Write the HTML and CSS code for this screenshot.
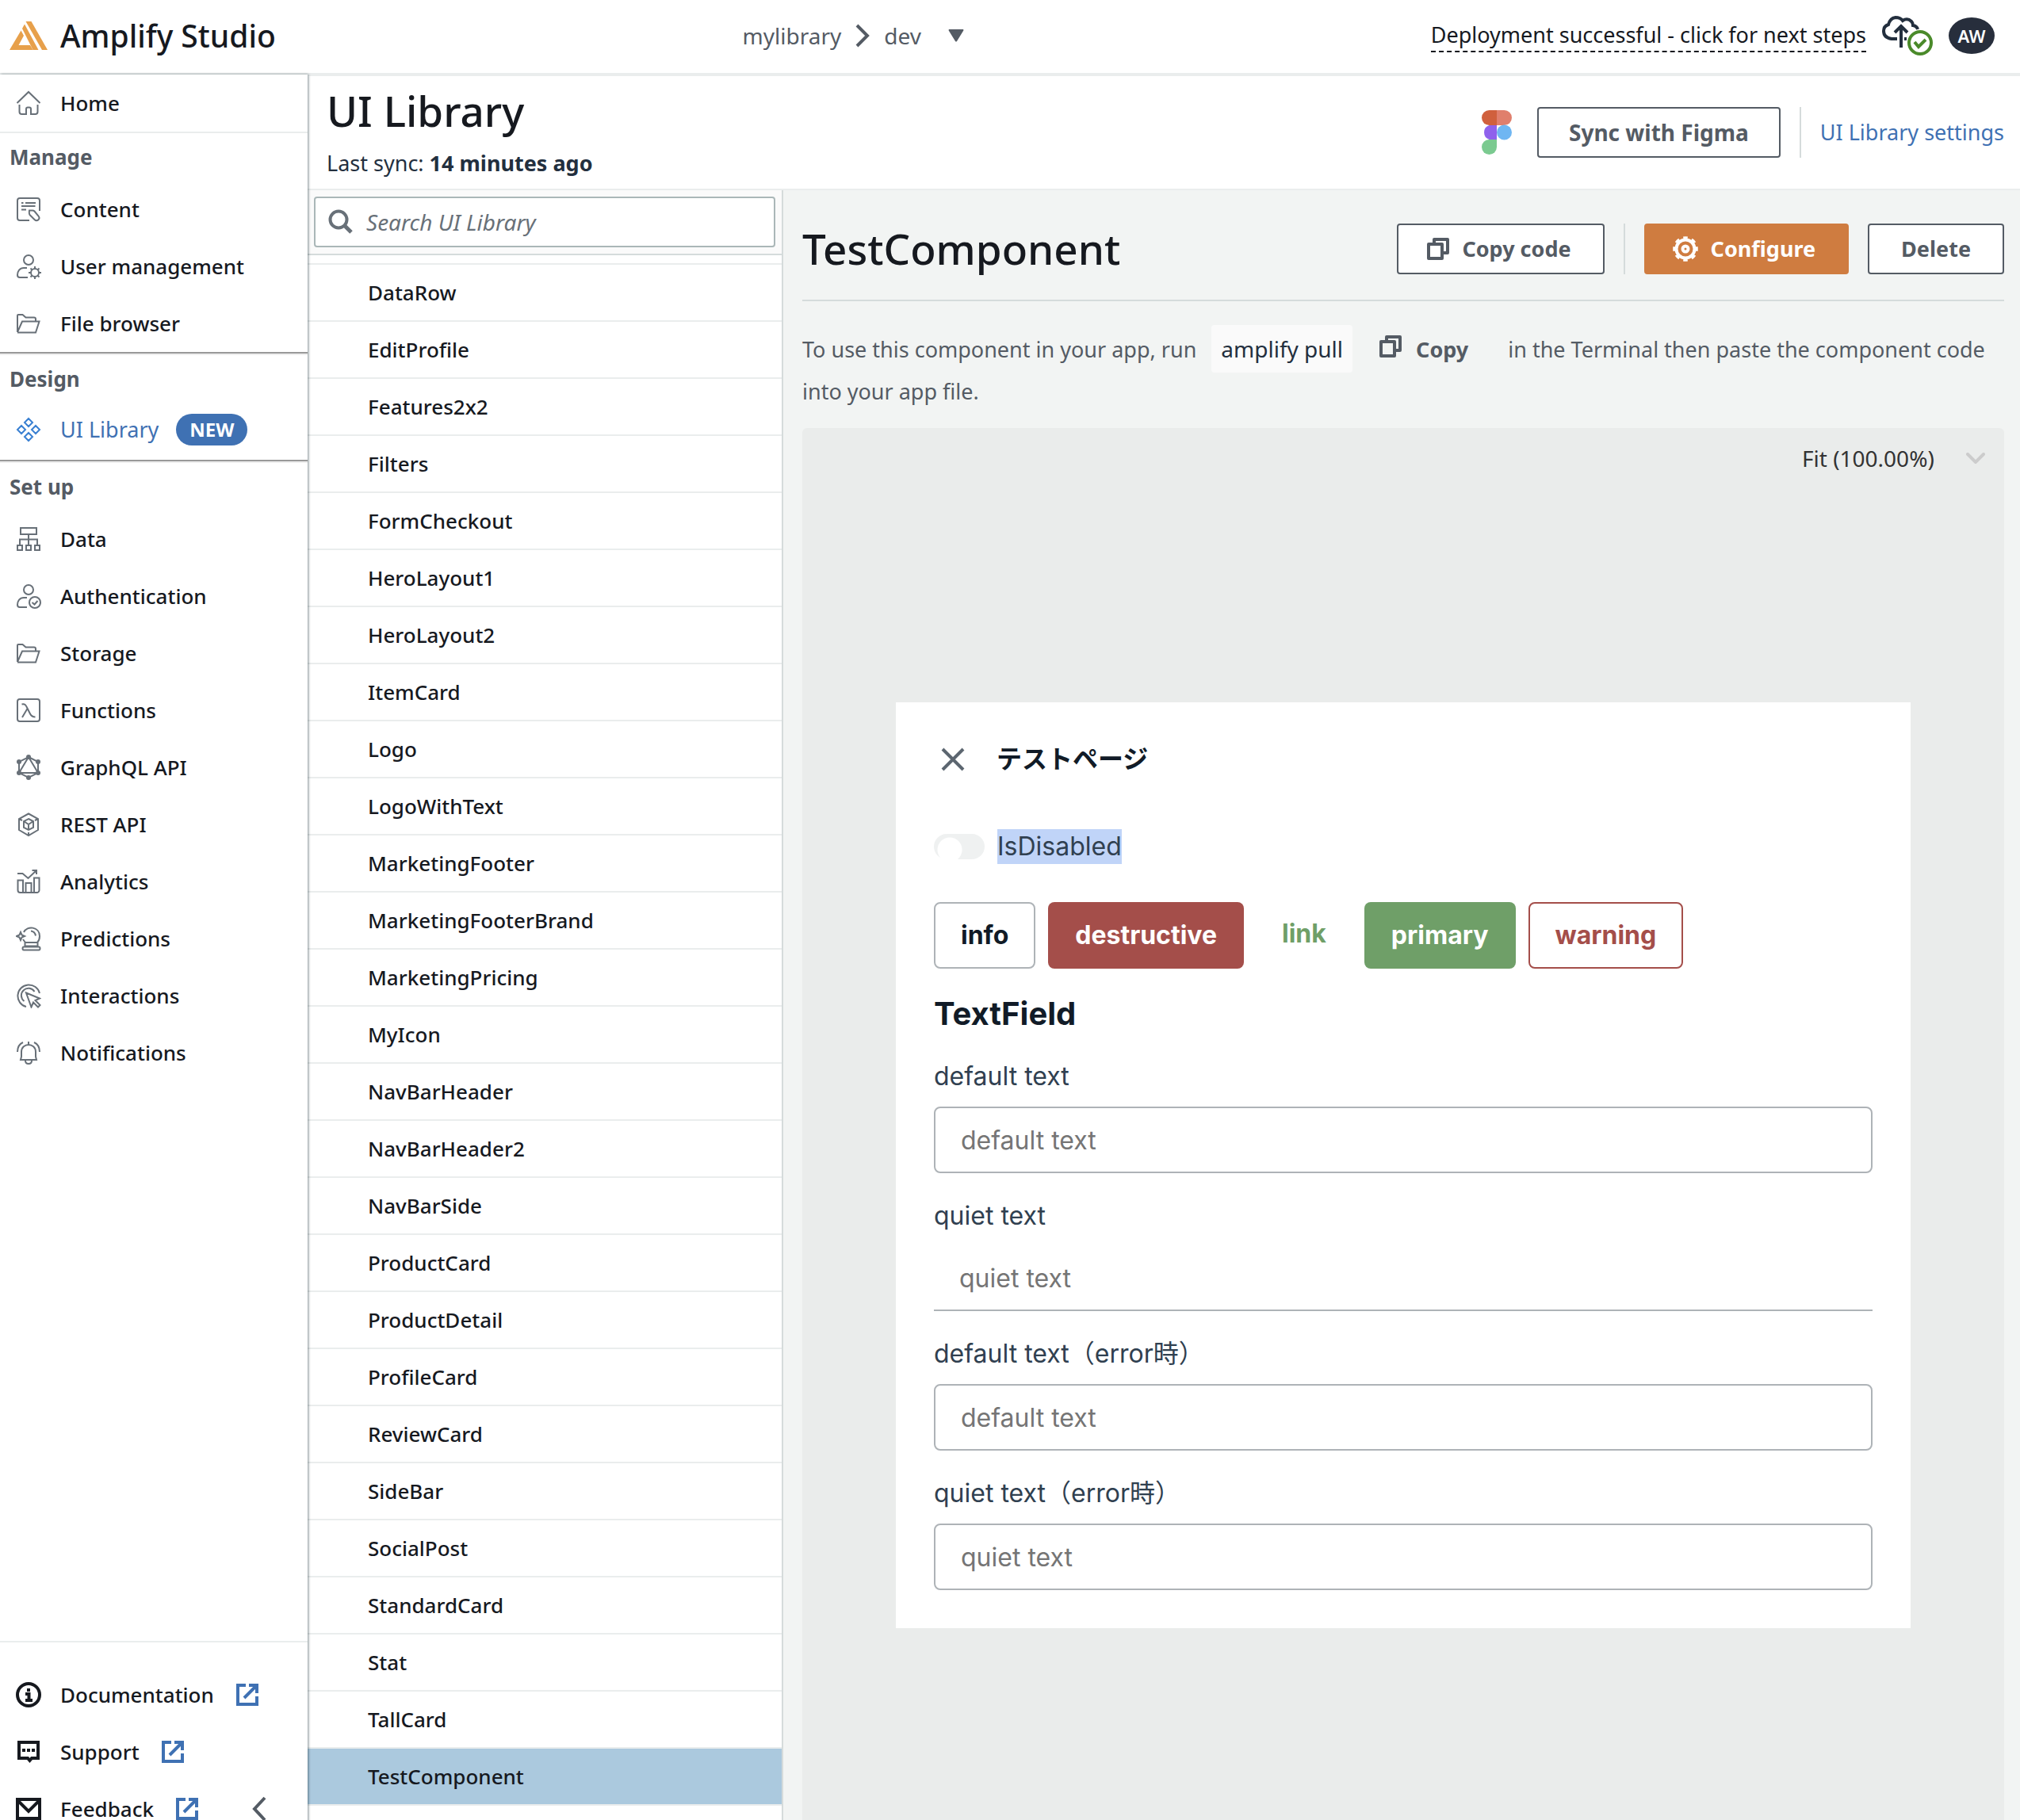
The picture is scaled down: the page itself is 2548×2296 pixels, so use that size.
FILE: index.html
```html
<!DOCTYPE html>
<html lang="en">
<head>
<meta charset="utf-8">
<title>Amplify Studio</title>
<link rel="stylesheet" href="styles.css">
</head>
<body>
<svg class="defs" aria-hidden="true">
  <symbol id="ext" viewBox="0 0 28 28"><path d="M12 2H2v24h24V16M16 2h10v10M25 3 10 18" fill="none" stroke="currentColor" stroke-width="4"/></symbol>
  <symbol id="copy" viewBox="0 0 28 28"><path d="M2 8h17v18H2zM9 7V2h17v17h-6" fill="none" stroke="currentColor" stroke-width="4" stroke-linejoin="round"/></symbol>
  <symbol id="folder" viewBox="0 0 32 32"><path d="M2 27V6q0-1 1-1h5.500l4 3.500H23q2 0 2 2V13M2 27l6-13.500h21.500L25 27.500H2"/></symbol>
</svg>
<div class="app">
  <header class="topbar">
    <a class="brand" href="#">
      <svg class="brand-logo" viewBox="0 0 48 36"><g fill="#e7a04b"><path d="M14.500 11.500 18 18 11.500 30H26l3.500 6H0z"/><path d="M16 9 19 3.500 36.500 36H29.500z"/><path d="M20.500 0h7L48 36h-7z"/></g></svg>
      Amplify Studio
    </a>
    <nav class="crumbs" aria-label="Environment">
      <a href="#">mylibrary</a>
      <svg class="crumb-sep" viewBox="0 0 18 30"><path d="M2 2l13 13L2 28" fill="none" stroke="currentColor" stroke-width="4"/></svg>
      <button class="env" type="button">dev
        <svg class="caret" viewBox="0 0 20 16"><path d="M1 0h18q1 1 0 2L11 15q-1 1-2 0L1 2Q0 1 1 0z" fill="currentColor"/></svg>
      </button>
    </nav>
    <div class="status">
      <a class="deploy" href="#">Deployment successful - click for next steps</a>
      <svg class="cloud" viewBox="0 0 64 50"><path d="M19 29h-7C5 28 2 24 2 19q0-6 6-8Q10 3 17 2q6 0 9 4 6-4 11 1 2 2 2 5 5 1 6 5M24 40V14M16 21l8-8 8 8M28 29h3" fill="none" stroke="#232f3e" stroke-width="4"/><circle cx="48" cy="34" r="14" fill="#fff" stroke="#4a8a2a" stroke-width="4"/><path d="M41 33l5 6 9-9" fill="none" stroke="#4a8a2a" stroke-width="4"/></svg>
      <button class="avatar" type="button">AW</button>
    </div>
  </header>
  <div class="body">
    <aside class="sidebar">
      <nav class="nav">
        <a class="nav-item home" href="#"><svg class="ico" viewBox="0 0 32 32"><path d="M1.500 16 16 2l14.500 14M4.500 18v9a3 3 0 0 0 3 3H13v-6.500a2 2 0 0 1 2-2h2a2 2 0 0 1 2 2V30h5.500a3 3 0 0 0 3-3v-9"/></svg>Home</a>
        <section class="group">
          <h2 class="group-title">Manage</h2>
          <a class="nav-item" href="#"><svg class="ico" viewBox="0 0 32 32"><path d="M17 30H5a3 3 0 0 1-3-3V5a3 3 0 0 1 3-3h22a3 3 0 0 1 3 3v13M7 8h2.500M12 8h13M7 12h17.500M7 16.500h6M17 17.500h4q1.500 0 2.500 1l5 6c3 4-2 7.500-5 4.500l-6-6q-1-1-.500-5.500z"/></svg>Content</a>
          <a class="nav-item" href="#"><svg class="ico" viewBox="0 0 32 32"><circle cx="16" cy="8" r="6"/><path d="M14 18h-4c-5 0-8 4-8 9q0 3 3 3h10"/><circle cx="24" cy="24" r="5"/><path d="M24 19v-3M24 29v3M19 24h-3M29 24h3M20.500 20.500l-2-2M27.500 27.500l2 2M20.500 27.500l-2 2M27.500 20.500l2-2"/></svg>User management</a>
          <a class="nav-item" href="#"><svg class="ico"><use href="#folder"/></svg>File browser</a>
        </section>
        <section class="group ruled design">
          <h2 class="group-title">Design</h2>
          <a class="nav-item current" href="#"><svg class="ico" viewBox="0 0 32 32"><path d="M16 2l5 5-5 5-5-5zM7 11l5 5-5 5-5-5zM25 11l5 5-5 5-5-5zM16 20l5 5-5 5-5-5z"/></svg>UI Library<span class="badge">NEW</span></a>
        </section>
        <section class="group ruled">
          <h2 class="group-title">Set up</h2>
          <a class="nav-item" href="#"><svg class="ico" viewBox="0 0 32 32"><path d="M6 2h20v8H6zM16 10v14M5 24v-7.500h22V24M2 24h6v6H2zM13 24h6v6h-6zM24 24h6v6h-6z"/></svg>Data</a>
          <a class="nav-item" href="#"><svg class="ico" viewBox="0 0 32 32"><circle cx="16" cy="8" r="6"/><path d="M14 18h-4c-5 0-8 4-8 9q0 3 3 3h9"/><circle cx="24" cy="24" r="7"/><path d="M20.500 24l3 2.500 4-4.500"/></svg>Authentication</a>
          <a class="nav-item" href="#"><svg class="ico"><use href="#folder"/></svg>Storage</a>
          <a class="nav-item" href="#"><svg class="ico" viewBox="0 0 32 32"><rect x="2" y="2" width="28" height="28" rx="3"/><path d="M7.500 8.500c4-1 5 1 6.500 4l4 8c1.500 3 3 4 6.500 4M14.500 14L8 25"/></svg>Functions</a>
          <a class="nav-item" href="#"><svg class="ico" viewBox="0 0 32 32"><path d="M16 3l12 6v14l-12 6-12-6V9zM16 3l12 20H4z"/><g fill="#687078" stroke="none"><circle cx="16" cy="3" r="3"/><circle cx="28" cy="9" r="3"/><circle cx="28" cy="23" r="3"/><circle cx="16" cy="29" r="3"/><circle cx="4" cy="23" r="3"/><circle cx="4" cy="9" r="3"/></g></svg>GraphQL API</a>
          <a class="nav-item" href="#"><svg class="ico" viewBox="0 0 32 32"><path d="M16 2.500l12 6.500v14l-12 7-12-7V9zM16 9l6 3v8l-6 3-6-3v-8zM10 12l6 4 6-4M16 16v7M16 26v4M4 9l4 2M28 9l-4 2"/></svg>REST API</a>
          <a class="nav-item" href="#"><svg class="ico" viewBox="0 0 32 32"><path d="M2 6h6.500l7 6L26 2M20.500 2H26v5M5.500 30h21a3 3 0 0 0 3-3V11.500h-6.500V30M5.500 30a3 3 0 0 1-3-3V14.500H9V30M12.500 30V18h7v12"/></svg>Analytics</a>
          <a class="nav-item" href="#"><svg class="ico" viewBox="0 0 32 32"><path d="M10 8c4-9 20-7 20 5 0 4-1 6-3 8H12l-3-4M19 6.500q5 .500 6 6M11.500 21v4.500h16V21M10 26.500h19q1.500 0 1.500 2t-1.500 2H10q-1.500 0-1.500-2t1.500-2zM6 8l1.500 3.500L11 13l-3.500 1.500L6 18l-1.500-3.500L1 13l3.500-1.500z"/></svg>Predictions</a>
          <a class="nav-item" href="#"><svg class="ico" viewBox="0 0 32 32"><path d="M13 30A14 14 0 1 1 30 13M10.500 23A9 9 0 1 1 23.500 11M13 12.500l17 7-5.500 2.500 6 6-2.500 2.500-6-6-2.500 6z"/></svg>Interactions</a>
          <a class="nav-item" href="#"><svg class="ico" viewBox="0 0 32 32"><path d="M16 2v4M7 21v-6c0-12 18-12 18 0v6l1 4H6zM12 26q0 4 4 4t4-4M2 15Q2 6 9 3M30 15q0-9-7-12"/></svg>Notifications</a>
        </section>
      </nav>
      <footer class="side-foot">
        <a class="nav-item dark" href="#"><svg class="ico" viewBox="0 0 32 32"><circle cx="16" cy="16" r="14" stroke-width="4"/><path d="M14 10h4M12 15h4.500v8M12 23h9" stroke-width="4"/></svg>Documentation<svg class="ext"><use href="#ext"/></svg></a>
        <a class="nav-item dark" href="#"><svg class="ico" viewBox="0 0 32 32"><path d="M4 4h24v20h-8l-2.500 3L15 24H4z" stroke-width="4"/><path d="M8 14h4M14 14h4M20 14h4" stroke-width="4"/></svg>Support<svg class="ext"><use href="#ext"/></svg></a>
        <div class="foot-row">
          <a class="nav-item dark" href="#"><svg class="ico" viewBox="0 0 32 32"><path d="M2 4h28v24H2zM3 6l13 13L29 6" stroke-width="4"/></svg>Feedback<svg class="ext"><use href="#ext"/></svg></a>
          <button class="collapse" type="button" aria-label="Collapse menu"><svg viewBox="0 0 18 32"><path d="M16 2 3 16l13 14" fill="none" stroke="currentColor" stroke-width="4"/></svg></button>
        </div>
      </footer>
    </aside>
    <main class="main">
      <div class="page-head">
        <div>
          <h1 class="title">UI Library</h1>
          <p class="sync">Last sync: <strong>14 minutes ago</strong></p>
        </div>
        <div class="page-actions">
          <svg class="figma" viewBox="0 0 38 56"><path d="M19 0h-9.500a9.500 9.500 0 0 0 0 19H19z" fill="#d0603d"/><path d="M19 0h9.500a9.500 9.500 0 0 1 0 19H19z" fill="#e07f6c"/><path d="M19 19h-9.500a9.500 9.500 0 0 0 0 18H19z" fill="#8f62ec"/><circle cx="28.500" cy="28" r="9.500" fill="#6fb6f2"/><path d="M19 37h-9.500a9.500 9.500 0 1 0 9.500 9.500z" fill="#7bca90"/></svg>
          <button class="btn" type="button">Sync with Figma</button>
          <a class="settings" href="#">UI Library settings</a>
        </div>
      </div>
      <div class="columns">
        <section class="library">
          <div class="search">
            <label class="search-box">
              <svg class="search-ico" viewBox="0 0 32 32"><circle cx="13" cy="13" r="10.500" fill="none" stroke="currentColor" stroke-width="4"/><path d="M20 20l9 9" stroke="currentColor" stroke-width="5"/></svg>
              <input class="search-input" type="search" placeholder="Search UI Library" aria-label="Search UI Library">
            </label>
          </div>
          <ul class="items">
            <li><a href="#">DataRow</a></li>
            <li><a href="#">EditProfile</a></li>
            <li><a href="#">Features2x2</a></li>
            <li><a href="#">Filters</a></li>
            <li><a href="#">FormCheckout</a></li>
            <li><a href="#">HeroLayout1</a></li>
            <li><a href="#">HeroLayout2</a></li>
            <li><a href="#">ItemCard</a></li>
            <li><a href="#">Logo</a></li>
            <li><a href="#">LogoWithText</a></li>
            <li><a href="#">MarketingFooter</a></li>
            <li><a href="#">MarketingFooterBrand</a></li>
            <li><a href="#">MarketingPricing</a></li>
            <li><a href="#">MyIcon</a></li>
            <li><a href="#">NavBarHeader</a></li>
            <li><a href="#">NavBarHeader2</a></li>
            <li><a href="#">NavBarSide</a></li>
            <li><a href="#">ProductCard</a></li>
            <li><a href="#">ProductDetail</a></li>
            <li><a href="#">ProfileCard</a></li>
            <li><a href="#">ReviewCard</a></li>
            <li><a href="#">SideBar</a></li>
            <li><a href="#">SocialPost</a></li>
            <li><a href="#">StandardCard</a></li>
            <li><a href="#">Stat</a></li>
            <li><a href="#">TallCard</a></li>
            <li><a class="selected" href="#" aria-current="true">TestComponent</a></li>
          </ul>
        </section>
        <section class="detail">
          <div class="detail-head">
            <h2 class="title">TestComponent</h2>
            <div class="detail-actions">
              <button class="btn" type="button"><svg class="btn-ico"><use href="#copy"/></svg>Copy code</button>
              <span class="divider"></span>
              <button class="btn btn-orange" type="button"><svg class="gear" viewBox="0 0 32 32"><g fill="none" stroke="currentColor"><circle cx="16" cy="16" r="11.500" stroke-width="4"/><circle cx="16" cy="16" r="14.300" stroke-width="3" pathLength="16" stroke-dasharray="1 1" stroke-dashoffset="0.500"/><circle cx="16" cy="16" r="3.500" stroke-width="4"/></g></svg>Configure</button>
              <button class="btn" type="button">Delete</button>
            </div>
          </div>
          <p class="usage">To use this component in your app, run <code class="cmd">amplify pull</code><button class="copy" type="button"><svg class="btn-ico"><use href="#copy"/></svg>Copy</button>in the Terminal then paste the component code into your app file.</p>
          <div class="canvas">
            <label class="zoom">
              <select class="zoom-select" aria-label="Zoom"><option>Fit (100.00%)</option></select>
              <svg class="zoom-ico" viewBox="0 0 24 14"><path d="M2 2l10 10L22 2" fill="none" stroke="#ccc" stroke-width="4" stroke-linecap="round"/></svg>
            </label>
            <div class="card">
              <div class="card-head">
                <button class="close" type="button" aria-label="Close"><svg viewBox="0 0 30 30"><path d="M2 2l26 26M28 2 2 28" stroke="#5c6670" stroke-width="4"/></svg></button>
                <h3 class="card-title" lang="ja">テストページ</h3>
              </div>
              <label class="toggle"><input class="switch" type="checkbox" role="switch" disabled><span class="marked">IsDisabled</span></label>
              <div class="variants">
                <button class="v v-info" type="button">info</button>
                <button class="v v-red" type="button">destructive</button>
                <button class="v v-link" type="button">link</button>
                <button class="v v-green" type="button">primary</button>
                <button class="v v-warn" type="button">warning</button>
              </div>
              <h3 class="fields-title">TextField</h3>
              <div class="field"><label for="f1">default text</label><input id="f1" type="text" placeholder="default text"></div>
              <div class="field quiet"><label for="f2">quiet text</label><input id="f2" type="text" placeholder="quiet text"></div>
              <div class="field"><label for="f3" lang="ja">default text（error時）</label><input id="f3" type="text" placeholder="default text"></div>
              <div class="field"><label for="f4" lang="ja">quiet text（error時）</label><input id="f4" type="text" placeholder="quiet text"></div>
            </div>
          </div>
        </section>
      </div>
    </main>
  </div>
</div>
</body>
</html>
```
FILE: styles.css
```css
* { box-sizing: border-box; }

body {
  margin: 0;
  font: 28px/40px "Noto Sans", "Open Sans", sans-serif;
  color: #16191f;
  background: #fff;
}

h1, h2, h3, p, ul { margin: 0; padding: 0; }
ul { list-style: none; }
a { color: inherit; text-decoration: none; }
button, input, select { font: inherit; color: inherit; }
button { border: 0; background: none; padding: 0; cursor: pointer; }
svg { flex: none; display: block; }
.defs { display: none; }

.app { height: 100vh; display: flex; flex-direction: column; overflow: hidden; }

/* Top bar */
.topbar {
  flex: none;
  height: 94px;
  padding: 0 32px 2px 12px;
  border-bottom: 2px solid #eaeded;
  display: flex;
  align-items: center;
  justify-content: space-between;
}
.brand { display: flex; align-items: center; gap: 16px; font-size: 39px; font-weight: 500; }
.brand-logo { width: 48px; height: 36px; }
.crumbs { display: flex; align-items: center; gap: 18px; color: #545b64; }
.crumb-sep { width: 18px; height: 30px; }
.env { display: flex; align-items: center; gap: 34px; }
.caret { width: 20px; height: 16px; }
.status { display: flex; align-items: center; gap: 20px; }
.deploy { border-bottom: 2px dashed #16191f; font-size: 27px; }
.cloud { width: 64px; height: 50px; }
.avatar {
  width: 58px;
  height: 46px;
  border-radius: 50%;
  background: #272e3c;
  color: #fff;
  font-size: 22px;
  font-weight: 600;
}

.body { flex: 1; min-height: 0; display: flex; }

/* Sidebar */
.sidebar {
  flex: none;
  width: 388px;
  height: calc(100vh - 64px);
  display: flex;
  flex-direction: column;
  background: #fff;
  box-shadow: 1px 0 3px rgba(0, 28, 36, .5);
  z-index: 1;
}
.nav { flex: 1; }
.nav-item {
  height: 72px;
  padding-left: 20px;
  display: flex;
  align-items: center;
  gap: 24px;
  font-size: 26px;
  font-weight: 500;
}
.home { height: 74px; border-bottom: 2px solid #eaeded; }
.ico { width: 32px; height: 32px; fill: none; stroke: #687078; stroke-width: 2; }
.ext { width: 28px; height: 28px; margin-left: 4px; color: #3f71b3; }
.group-title { height: 60px; padding: 10px 12px; font-size: 26px; line-height: 40px; color: #545b64; }
.ruled { border-top: 2px solid #999; box-shadow: inset 0 2px #eee; padding-top: 4px; }
.ruled .group-title { height: 58px; padding-top: 8px; }
.current { height: 68px; color: #3f71b3; font-size: 27px; font-weight: 400; }
.current .ico { stroke: #3a80d2; stroke-width: 2; }
.design { padding-bottom: 4px; }
.badge {
  height: 40px;
  margin-left: -2px;
  padding: 0 17px;
  border-radius: 20px;
  background: #3f71b3;
  color: #fff;
  font-size: 24px;
  font-weight: 700;
  line-height: 40px;
}
.side-foot { border-top: 2px solid #eaeded; padding: 30px 0 8px; }
.dark .ico { stroke: #16191f; }
.foot-row { display: flex; justify-content: space-between; padding-right: 52px; }
.collapse { color: #545b64; }
.collapse svg { width: 18px; height: 32px; }

/* Page heading */
.main { flex: 1; min-width: 0; display: flex; flex-direction: column; }
.page-head {
  flex: none;
  height: 146px;
  padding: 0 20px 0 24px;
  border-top: 2px solid #eaeded;
  border-bottom: 2px solid #eaeded;
  display: flex;
  justify-content: space-between;
}
.title { font-size: 53px; line-height: 68px; font-weight: 500; }
.page-head .title { padding-top: 10px; }
.sync { padding-top: 12px; font-size: 27px; color: #232f3e; }
.page-actions { display: flex; align-items: center; gap: 24px; }
.figma { width: 38px; height: 56px; margin-right: 8px; }
.btn {
  height: 64px;
  padding: 0 38px;
  display: flex;
  align-items: center;
  gap: 16px;
  border: 2px solid #545b64;
  border-radius: 4px;
  background: #fff;
  color: #545b64;
  font-weight: 700;
}
.detail-actions .btn { padding: 0 40px 0 36px; font-size: 27px; }
.settings {
  height: 64px;
  padding-left: 24px;
  border-left: 2px solid #d5dbdb;
  font-size: 27px;
  line-height: 64px;
  color: #3f71b3;
}

/* Component list */
.columns { flex: 1; min-height: 0; display: flex; }
.library {
  flex: none;
  width: 600px;
  border-right: 2px solid #d5dbdb;
  display: flex;
  flex-direction: column;
}
.search { flex: none; padding: 8px; background: #fafafa; border-bottom: 2px solid #d5dbdb; }
.search-box {
  height: 64px;
  padding: 0 16px;
  display: flex;
  align-items: center;
  gap: 16px;
  border: 2px solid #aab7b8;
  border-radius: 4px;
  background: #fff;
  color: #687078;
}
.search-ico { width: 32px; height: 32px; }
.search-input { flex: 1; min-width: 0; border: 0; outline: 0; padding: 0; background: none; }
.search-input::placeholder { color: #687078; font-style: italic; opacity: 1; }
.items { flex: 1; min-height: 0; overflow: hidden; padding-top: 10px; }
.items li { border-top: 2px solid #eaeded; }
.items li:last-child { border-bottom: 2px solid #eaeded; }
.items a { display: block; height: 70px; padding-left: 76px; font-size: 26px; line-height: 70px; font-weight: 500; }
.items .selected { background: #abc9de; }

/* Detail */
.detail {
  flex: 1;
  min-width: 0;
  padding: 40px 20px 0 24px;
  background: #f2f4f3;
  overflow: hidden;
}
.detail-head {
  height: 100px;
  border-bottom: 2px solid #d5dbdb;
  display: flex;
  justify-content: space-between;
}
.detail-actions { display: flex; gap: 24px; padding-top: 2px; }
.divider { width: 2px; height: 64px; background: #d5dbdb; }
.detail-actions .btn-orange { border-color: #cf7c40; background: #cf7c40; color: #fff; padding-left: 34px; }
.detail-actions .btn:last-child { padding: 0 40px; }
.btn-ico { width: 28px; height: 28px; }
.gear { width: 32px; height: 32px; }
.usage { padding-top: 30px; font-size: 27px; line-height: 48px; color: #545b64; }
.cmd {
  display: inline-block;
  height: 60px;
  margin: 0 34px 0 12px;
  padding: 0 12px;
  border-radius: 4px;
  background: #fafafa;
  color: #232f3e;
  font-family: inherit;
  font-size: 28px;
  line-height: 60px;
}
.copy {
  display: inline-flex;
  align-items: baseline;
  gap: 18px;
  margin-right: 50px;
  font-weight: 700;
  line-height: 40px;
}
.copy .btn-ico { margin-bottom: -4px; }

.canvas { margin-top: 22px; height: 1900px; border-radius: 6px; background: #eaeceb; }
.zoom { display: flex; align-items: center; justify-content: flex-end; gap: 40px; padding: 18px 24px 0 0; color: #333; }
.zoom-select { appearance: none; border: 0; background: none; padding: 0; }
.zoom-ico { width: 24px; height: 14px; }

/* Previewed component */
.card {
  width: 1280px;
  margin: 288px auto 0;
  padding: 48px;
  background: #fff;
  font-family: Inter, "Noto Sans CJK JP", sans-serif;
  font-size: 32px;
  color: #304050;
}
.card-head { height: 48px; display: flex; align-items: center; gap: 40px; padding-left: 9px; color: #111b27; }
.close svg { width: 30px; height: 30px; }
.card-title { font-size: 32px; line-height: 48px; }
.toggle { display: flex; align-items: center; gap: 16px; margin-top: 64px; }
.switch {
  appearance: none;
  flex: none;
  width: 64px;
  height: 32px;
  margin: 0;
  border-radius: 16px;
  background: radial-gradient(circle at 20px 20px, #fff 15px, #eff1f1 16px);
}
.marked { background: #c0d4f8; line-height: 44px; }
.variants { display: flex; gap: 16px; margin-top: 48px; }
.v { height: 84px; padding: 0 32px; border: 2px solid transparent; border-radius: 8px; font-size: 32px; font-weight: 700; }
.v-info { border-color: #aeb3b7; color: #111b27; }
.v-red { background: #a44e4a; color: #fff; }
.v-link { height: 80px; padding: 0 30px; color: #6f9f68; }
.v-green { background: #6f9f68; color: #fff; }
.v-warn { border-color: #a44e4a; color: #a44e4a; }
.fields-title { margin-top: 32px; font-size: 40px; line-height: 50px; color: #111b27; }
.field { display: flex; flex-direction: column; gap: 16px; margin-top: 32px; line-height: 44px; }
.field input {
  height: 84px;
  padding: 0 32px;
  border: 2px solid #aeb3b7;
  border-radius: 8px;
  background: #fff;
  outline: 0;
}
.field input::placeholder { color: #757575; opacity: 1; }
.quiet input { height: 82px; border-width: 0 0 2px; border-radius: 0; }
```
